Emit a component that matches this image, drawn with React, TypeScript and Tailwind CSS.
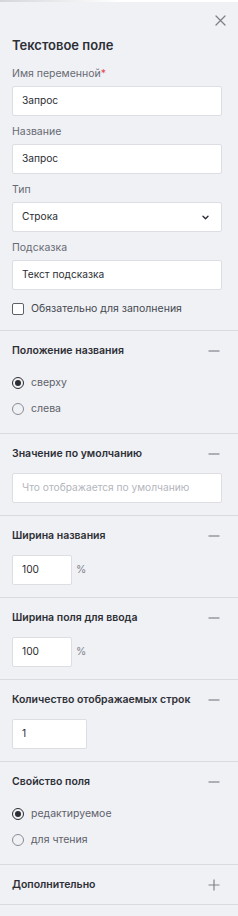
import { ReactNode } from 'react';

// Small inline icons
const CloseIcon = () => (
  <svg width="11" height="11" viewBox="0 0 11 11" fill="none" className="text-[#7d8089]">
    <path d="M1 1L10 10M10 1L1 10" stroke="currentColor" strokeWidth="1.3" strokeLinecap="round" />
  </svg>
);

const MinusIcon = () => (
  <svg width="12" height="12" viewBox="0 0 12 12" fill="none" className="text-[#80838c]">
    <path d="M0.5 6H11.5" stroke="currentColor" strokeWidth="1.2" />
  </svg>
);

const PlusIcon = () => (
  <svg width="12" height="12" viewBox="0 0 12 12" fill="none" className="text-[#80838c]">
    <path d="M0.5 6H11.5M6 0.5V11.5" stroke="currentColor" strokeWidth="1.2" />
  </svg>
);

const Chevron = () => (
  <svg width="7" height="5" viewBox="0 0 7 5" fill="none" className="text-[#2b2d33]">
    <path d="M1 1.2L3.5 3.7L6 1.2" stroke="currentColor" strokeWidth="1.4" strokeLinecap="round" strokeLinejoin="round" />
  </svg>
);

const Field = ({ label, required, children }: { label: string; required?: boolean; children: ReactNode }) => (
  <div className="flex flex-col">
    <div className="h-4 leading-4 text-[10.5px] text-[#676a73] mb-1">
      {label}
      {required && <span className="text-[#e5484d]">*</span>}
    </div>
    {children}
  </div>
);

const TextBox = ({ value, placeholder, className = 'w-full' }: { value?: string; placeholder?: string; className?: string }) => (
  <div
    className={`h-[30px] ${className} bg-white border border-[#dcdee3] rounded-[2px] px-[9px] flex items-center whitespace-nowrap text-[10.2px] ${
      value ? 'text-[#2b2d33]' : 'text-[#b3b6bd]'
    }`}
  >
    {value ?? placeholder}
  </div>
);

const Radio = ({ label, checked }: { label: string; checked?: boolean }) => (
  <div className="h-[26px] flex items-center gap-[7px]">
    {checked ? (
      <span className="w-3 h-3 rounded-full border-[1.5px] border-[#2b2d33] flex items-center justify-center">
        <span className="w-[6px] h-[6px] rounded-full bg-[#2b2d33]" />
      </span>
    ) : (
      <span className="w-3 h-3 rounded-full border border-[#8a8d95]" />
    )}
    <span className="text-[10.5px] text-[#5e616a]">{label}</span>
  </div>
);

const Section = ({ title, open = true, children, pb = 'pb-3' }: { title: string; open?: boolean; children?: ReactNode; pb?: string }) => (
  <div className={`border-t border-[#d9dbe0] pt-3 ${pb}`}>
    <div className="px-3 pr-4 h-4 flex items-center justify-between">
      <span className="text-[10.5px] leading-4 font-semibold text-[#2d2f36] whitespace-nowrap">{title}</span>
      <span className="w-4 h-4 flex items-center justify-center">{open ? <MinusIcon /> : <PlusIcon />}</span>
    </div>
    {children && <div className="px-3 pr-4 mt-[11px]">{children}</div>}
  </div>
);

export default function App() {
  return (
    <div className="w-[238px] min-h-[916px] bg-[#f0f1f5] font-[Inter,sans-serif]">
      {/* top strip */}
      <div className="h-[2px] bg-gradient-to-r from-[#d5d6db] via-white to-white" />

      <div className="px-3 pr-4">
        <div className="pt-[13px] flex justify-end -mr-1">
          <CloseIcon />
        </div>
        <div className="mt-[9px] h-5 leading-5 text-[13px] font-semibold text-[#2d2f36]">Текстовое поле</div>

        <div className="mt-[11px] flex flex-col gap-2">
          <Field label="Имя переменной" required>
            <TextBox value="Запрос" />
          </Field>
          <Field label="Название">
            <TextBox value="Запрос" />
          </Field>
          <Field label="Тип">
            <div className="h-[30px] w-full bg-white border border-[#dcdee3] rounded-[2px] pl-[9px] pr-3 flex items-center justify-between text-[10.2px] text-[#2b2d33]">
              <span>Строка</span>
              <Chevron />
            </div>
          </Field>
          <Field label="Подсказка">
            <TextBox value="Текст подсказка" />
          </Field>
        </div>

        <div className="mt-[9px] h-5 flex items-center gap-[7px]">
          <span className="w-3 h-3 rounded-[2px] border border-[#5e616a] bg-white" />
          <span className="text-[10.5px] text-[#45484f]">Обязательно для заполнения</span>
        </div>
        <div className="h-[11px]" />
      </div>

      <Section title="Положение названия" pb="pb-[11px]">
        <Radio label="сверху" checked />
        <Radio label="слева" />
      </Section>

      <Section title="Значение по умолчанию">
        <TextBox placeholder="Что отображается по умолчанию" />
      </Section>

      <Section title="Ширина названия">
        <div className="flex items-center gap-1">
          <TextBox value="100" className="w-[60px]" />
          <span className="text-[10.5px] text-[#80838c]">%</span>
        </div>
      </Section>

      <Section title="Ширина поля для ввода">
        <div className="flex items-center gap-1">
          <TextBox value="100" className="w-[60px]" />
          <span className="text-[10.5px] text-[#80838c]">%</span>
        </div>
      </Section>

      <Section title="Количество отображаемых строк">
        <TextBox value="1" className="w-[75px]" />
      </Section>

      <Section title="Свойство поля" pb="pb-[11px]">
        <Radio label="редактируемое" checked />
        <Radio label="для чтения" />
      </Section>

      <div className="border-b border-[#d9dbe0]">
        <Section title="Дополнительно" open={false} pb="pb-[11px]" />
      </div>
    </div>
  );
}
